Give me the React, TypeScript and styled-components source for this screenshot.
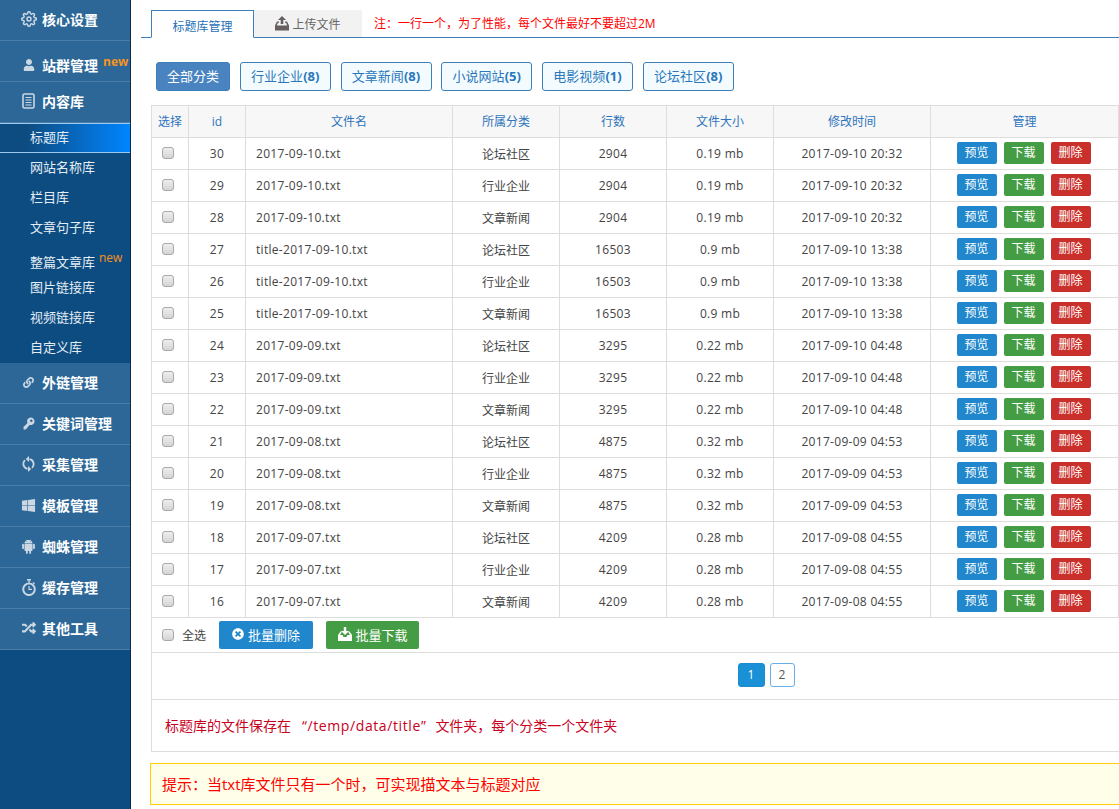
import React from "react"
import styled, {createGlobalStyle} from "styled-components"
import {FaUser, FaWindows, FaRandom, FaLink, FaTimesCircle} from "react-icons/fa"
import {AiFillAndroid} from "react-icons/ai"
import {FiSettings} from "react-icons/fi"

const FONT = `"Open Sans", "Noto Sans CJK SC", sans-serif`

const GlobalStyle = createGlobalStyle`
	html, body {
		margin: 0;
		height: 100%;
		overflow: hidden;
		background: #fff;
		font-family: ${FONT};
		font-size: 12px;
		color: #444;
	}
`

const Page = styled.div`
	display: flex;
	width: 1119px;
	height: 809px;
	overflow: hidden;
`

const Sidebar = styled.nav`
	flex: 0 0 130px;
	box-sizing: content-box;
	border-right: 1px solid #0b2a47;
	background: #0d4c81;
`

const MenuRow = styled.div<{ $low?: boolean }>`
	display: flex;
	align-items: center;
	box-sizing: border-box;
	height: 41px;
	padding: ${({$low}) => $low ? "8px 0 0" : "0 0 2px"};
	border-bottom: 1px solid #4a7ea8;
	background: #2c6797;
	color: #fff;
	font-size: 14px;
	font-weight: 700;
	position: relative;
`

const MenuIcon = styled.span`
	flex: 0 0 42px;
	display: flex;
	align-items: center;
	justify-content: center;
	padding-left: 15px;
	box-sizing: border-box;
	color: #cbd7e2;
	font-size: 15px;
`

const NewTag = styled.sup`
	position: absolute;
	color: #f7931e;
	font-size: 12px;
	font-weight: 700;
	line-height: 1;
	left: 103px;
	top: 15px;
`

const SubItem = styled.div<{ $active?: boolean, $low?: boolean }>`
	box-sizing: border-box;
	height: 30px;
	line-height: ${({$low}) => $low ? "38px" : "29px"};
	padding-left: 30px;
	font-size: 13px;
	color: #e4edf4;
	position: relative;
	${({$active}) => $active && `
		background: linear-gradient(to right, #0d4c81 20%, #0085ff 100%);
		border-top: 1px solid #9cc9f0;
		border-bottom: 1px solid #9cc9f0;
		line-height: 27px;
	`}
`

const SubNew = styled.sup`
	position: absolute;
	left: 99px;
	top: 9px;
	color: #f7931e;
	font-size: 12px;
	line-height: 1;
`

const Main = styled.main`
	flex: 1;
	min-width: 0;
	padding: 10px 0 0 10px;
`

const TabBar = styled.div`
	display: flex;
	align-items: flex-start;
	box-sizing: border-box;
	height: 28px;
	padding-left: 10px;
	border-bottom: 1px solid #3d7fb8;
`

const Tab = styled.div<{ $active?: boolean }>`
	display: flex;
	align-items: center;
	justify-content: center;
	gap: 3px;
	box-sizing: border-box;
	width: ${({$active}) => $active ? "103px" : "108px"};
	height: ${({$active}) => $active ? "28px" : "27px"};
	padding-top: ${({$active}) => $active ? "4px" : "0"};
	font-size: 12px;
	color: ${({$active}) => $active ? "#1f70b5" : "#666"};
	background: ${({$active}) => $active ? "#fff" : "#f2f2f2"};
	border: ${({$active}) => $active ? "1px solid #3d7fb8" : "none"};
	border-bottom: ${({$active}) => $active ? "1px solid #fff" : "none"};
`

const TabNote = styled.div`
	margin-left: 12px;
	line-height: 28px;
	color: #f00;
	font-size: 12px;
`

const Filters = styled.div`
	display: flex;
	gap: 9.75px;
	padding: 24px 0 14px 15px;
`

const FilterButton = styled.div<{ $active?: boolean }>`
	box-sizing: border-box;
	width: ${({$active}) => $active ? "74px" : "91px"};
	height: 29px;
	line-height: 27px;
	text-align: center;
	border: 1px solid #3d7fb8;
	border-radius: 3px;
	font-size: 13px;
	color: ${({$active}) => $active ? "#fff" : "#2a78bb"};
	background: ${({$active}) => $active ? "#4a84c0" : "#f3fbff"};
	b {
		font-weight: 700;
	}
`

const Content = styled.div`
	margin-left: 10px;
	width: 1229px;
`

const Table = styled.table`
	width: 967px;
	table-layout: fixed;
	border-collapse: collapse;
	text-align: center;
	font-size: 12px;
`

const Th = styled.th`
	box-sizing: border-box;
	height: 32px;
	padding: 0 0 1px;
	font-weight: 400;
	background: #f7f7f7;
	color: #2f74bd;
	border: 1px solid #ddd;
`

const Td = styled.td<{ $left?: boolean, $latin?: boolean }>`
	box-sizing: border-box;
	height: 32px;
	padding: ${({$left}) => $left ? "0 0 0 10px" : "0"};
	text-align: ${({$left}) => $left ? "left" : "center"};
	letter-spacing: ${({$latin}) => $latin ? "0.3px" : "0"};
	border: 1px solid #ddd;
	color: #444;
`

const Check = styled.input.attrs({type: "checkbox"})`
	appearance: none;
	display: block;
	box-sizing: border-box;
	width: 12px;
	height: 12px;
	margin: 0;
	border: 1px solid #a9a9a9;
	border-radius: 3px;
	background: linear-gradient(#eee, #d4d4d4);
`

const CheckCell = styled.div`
	display: flex;
	justify-content: center;
	padding: 0 5px 2px 0;
`

const RowActions = styled.div`
	display: flex;
	justify-content: center;
	gap: 7px;
	padding: 0 2px 2px 0;
`

const colors = {blue: "#2087cc", green: "#449d44", red: "#c9302c"}

const SmallButton = styled.div<{ $color: keyof typeof colors }>`
	width: 40px;
	height: 22px;
	line-height: 22px;
	border-radius: 2px;
	color: #fff;
	font-size: 12px;
	text-align: center;
	background: ${({$color}) => colors[$color]};
`

const Panel = styled.div`
	border-left: 1px solid #ddd;
	border-bottom: 1px solid #ddd;
`

const BatchBar = styled.div`
	display: flex;
	align-items: center;
	box-sizing: border-box;
	height: 35px;
	padding-left: 10px;
	border-bottom: 1px solid #ddd;
`

const SelectAll = styled.span`
	margin-left: 8px;
	margin-right: 13px;
	font-size: 12px;
	color: #444;
`

const BatchButton = styled.div<{ $color: keyof typeof colors, $gap?: number }>`
	display: flex;
	align-items: center;
	justify-content: center;
	gap: 4px;
	box-sizing: border-box;
	width: ${({$gap}) => $gap ? "93px" : "94px"};
	height: 28px;
	padding-bottom: 2px;
	margin-left: ${({$gap}) => $gap || 0}px;
	border-radius: 2px;
	color: #fff;
	font-size: 13px;
	background: ${({$color}) => colors[$color]};
`

const Pager = styled.div`
	display: flex;
	justify-content: center;
	gap: 5px;
	box-sizing: border-box;
	height: 47px;
	padding-top: 10px;
	border-bottom: 1px solid #ddd;
`

const PageLink = styled.div<{ $active?: boolean }>`
	box-sizing: border-box;
	width: ${({$active}) => $active ? "27px" : "25px"};
	height: 24px;
	line-height: 22px;
	text-align: center;
	border-radius: 3px;
	border: 1px solid ${({$active}) => $active ? "#1a8dd0" : "#6aaee6"};
	background: ${({$active}) => $active ? "#1a90d6" : "#fff"};
	color: ${({$active}) => $active ? "#fff" : "#555"};
	font-size: 12px;
`

const Hint = styled.div`
	height: 51px;
	line-height: 52px;
	padding-left: 13px;
	color: #c8001e;
	font-size: 14px;
`

const HintPath = styled.span`
	margin: 0 9px 0 11px;
	letter-spacing: 0.6px;
`

const Tip = styled.div`
	box-sizing: border-box;
	height: 42px;
	line-height: 40px;
	margin: 11px 0 0 -1px;
	padding-left: 11px;
	border: 1px solid #fc0;
	background: #ffffe9;
	color: #f00;
	font-size: 15px;
`

// glyphs that the icon packs don't carry in this shape
const DocIcon = () => (
	<svg width="13" height="16" viewBox="0 0 13 16">
		<rect x="1" y="1" width="11" height="14" rx="1.5" fill="none" stroke="#cbd7e2" strokeWidth="1.6"/>
		<path d="M3.500 4.500h6M3.500 7h6M3.500 9.500h6M3.500 12h6" stroke="#cbd7e2" strokeWidth="1.2"/>
	</svg>
)

const WatchIcon = () => (
	<svg width="16" height="17" viewBox="0 0 16 17">
		<path d="M6 0h4v1.600H6z" fill="#c6d5e2"/>
		<path d="M7.200 1.500h1.600v2H7.200zM12.500 3l1.500 1.500-1 1-1.500-1.500z" fill="#c6d5e2"/>
		<circle cx="8" cy="10.300" r="5.800" fill="none" stroke="#c6d5e2" strokeWidth="2"/>
		<path d="M8 7v3.300h3" fill="none" stroke="#c6d5e2" strokeWidth="1.200"/>
	</svg>
)

const KeyIcon = () => (
	<svg width="12" height="13" viewBox="0 0 12 13">
		<path d="M7.800 0.500a3.800 3.800 0 1 1-1.300 7.400L2.800 12.500H0.500V10l4-4a3.800 3.800 0 0 1 3.300-5.500z" fill="#cbd7e2"/>
		<circle cx="8.300" cy="3.800" r="1.200" fill="#2c6797"/>
	</svg>
)

const RefreshIcon = () => (
	<svg width="13" height="16" viewBox="0 0 13 16" fill="none">
		<path d="M7.500 3.200a5 5 0 0 1 2.500 8.600" stroke="#cbd7e2" strokeWidth="1.800"/>
		<path d="M5.500 12.800a5 5 0 0 1-2.500-8.600" stroke="#cbd7e2" strokeWidth="1.800"/>
		<path d="M7 0v6L3.800 3zM6 10v6l3.200-3z" fill="#cbd7e2"/>
	</svg>
)

const UploadIcon = () => (
	<svg width="14" height="15" viewBox="0 0 14 15">
		<path d="M7 0l4 4H8.300v4H5.700V4H3z" fill="#665f5f"/>
		<path d="M0 14.500V9.500L2 5.500h2v1.300H3L1.800 9.500h10.400L11 6.800h-1V5.500h2l2 4v5z" fill="#665f5f"/>
	</svg>
)

const DownloadIcon = () => (
	<svg width="14" height="14" viewBox="0 0 14 14">
		<path d="M5.800 0h2.400v4H11L7 8 3 4h2.800z" fill="#fff"/>
		<path d="M0 14V8l2.500-3.500H4L2 8h2.500l1 2h3l1-2H12l-2-3.500h1.500L14 8v6z" fill="#fff"/>
	</svg>
)

type Menu = { label: string, icon: React.ReactNode, isNew?: boolean }

const topMenus: Menu[] = [
	{label: "核心设置", icon: <FiSettings size={16} strokeWidth={2.2}/>},
	{label: "站群管理", icon: <FaUser size={12}/>, isNew: true},
	{label: "内容库", icon: <DocIcon/>},
]

const bottomMenus: Menu[] = [
	{label: "外链管理", icon: <FaLink size={11}/>},
	{label: "关键词管理", icon: <KeyIcon/>},
	{label: "采集管理", icon: <RefreshIcon/>},
	{label: "模板管理", icon: <FaWindows size={15}/>},
	{label: "蜘蛛管理", icon: <AiFillAndroid size={17}/>},
	{label: "缓存管理", icon: <WatchIcon/>},
	{label: "其他工具", icon: <FaRandom size={14}/>},
]

const subMenus = ["标题库", "网站名称库", "栏目库", "文章句子库", "整篇文章库", "图片链接库", "视频链接库", "自定义库"]

const filters = [
	{label: "行业企业", count: 8},
	{label: "文章新闻", count: 8},
	{label: "小说网站", count: 5},
	{label: "电影视频", count: 1},
	{label: "论坛社区", count: 8},
]

const groups = [
	{name: "2017-09-10.txt", lines: 2904, size: "0.19 mb", time: "2017-09-10 20:32", ids: [30, 29, 28]},
	{name: "title-2017-09-10.txt", lines: 16503, size: "0.9 mb", time: "2017-09-10 13:38", ids: [27, 26, 25]},
	{name: "2017-09-09.txt", lines: 3295, size: "0.22 mb", time: "2017-09-10 04:48", ids: [24, 23, 22]},
	{name: "2017-09-08.txt", lines: 4875, size: "0.32 mb", time: "2017-09-09 04:53", ids: [21, 20, 19]},
	{name: "2017-09-07.txt", lines: 4209, size: "0.28 mb", time: "2017-09-08 04:55", ids: [18, 17, 16]},
]

const categories = ["论坛社区", "行业企业", "文章新闻"]
const columns = [37, 57, 207, 107, 107, 107, 157, 188]
const headers = ["选择", "id", "文件名", "所属分类", "行数", "文件大小", "修改时间", "管理"]

const MenuItem = ({label, icon, isNew}: Menu) => (
	<MenuRow $low={isNew}>
		<MenuIcon>{icon}</MenuIcon>
		{label}
		{isNew ? <NewTag>new</NewTag> : null}
	</MenuRow>
)

const App = () => (
	<Page>
		<GlobalStyle/>
		<Sidebar>
			{topMenus.map(m => <MenuItem key={m.label} {...m}/>)}
			{subMenus.map((s, i) => (
				<SubItem key={s} $active={i === 0} $low={i === 4}>
					{s}
					{i === 4 ? <SubNew>new</SubNew> : null}
				</SubItem>
			))}
			{bottomMenus.map(m => <MenuItem key={m.label} {...m}/>)}
		</Sidebar>
		<Main>
			<TabBar>
				<Tab $active>标题库管理</Tab>
				<Tab><UploadIcon/>上传文件</Tab>
				<TabNote>注：一行一个，为了性能，每个文件最好不要超过2M</TabNote>
			</TabBar>
			<Filters>
				<FilterButton $active>全部分类</FilterButton>
				{filters.map(f => (
					<FilterButton key={f.label}>{f.label}<b>({f.count})</b></FilterButton>
				))}
			</Filters>
			<Content>
				<Table>
					<colgroup>
						{columns.map((w, i) => <col key={i} width={w}/>)}
					</colgroup>
					<thead>
						<tr>{headers.map(h => <Th key={h}>{h}</Th>)}</tr>
					</thead>
					<tbody>
						{groups.flatMap(g => g.ids.map((id, i) => (
							<tr key={id}>
								<Td><CheckCell><Check/></CheckCell></Td>
								<Td $latin>{id}</Td>
								<Td $left $latin>{g.name}</Td>
								<Td>{categories[i]}</Td>
								<Td $latin>{g.lines}</Td>
								<Td $latin>{g.size}</Td>
								<Td $latin>{g.time}</Td>
								<Td>
									<RowActions>
										<SmallButton $color="blue">预览</SmallButton>
										<SmallButton $color="green">下载</SmallButton>
										<SmallButton $color="red">删除</SmallButton>
									</RowActions>
								</Td>
							</tr>
						)))}
					</tbody>
				</Table>
				<Panel>
					<BatchBar>
						<Check/>
						<SelectAll>全选</SelectAll>
						<BatchButton $color="blue"><FaTimesCircle size={12}/>批量删除</BatchButton>
						<BatchButton $color="green" $gap={13}><DownloadIcon/>批量下载</BatchButton>
					</BatchBar>
					<Pager>
						<PageLink $active>1</PageLink>
						<PageLink>2</PageLink>
					</Pager>
					<Hint>标题库的文件保存在<HintPath>“/temp/data/title”</HintPath>文件夹，每个分类一个文件夹</Hint>
				</Panel>
				<Tip>提示：当txt库文件只有一个时，可实现描文本与标题对应</Tip>
			</Content>
		</Main>
	</Page>
)

export default App
